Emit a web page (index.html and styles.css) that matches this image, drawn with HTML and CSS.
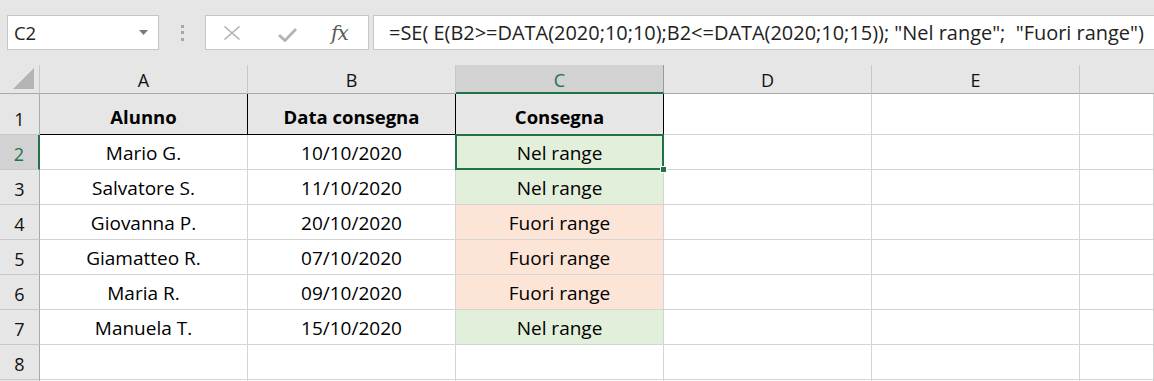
FILE: index.html
```html
<!DOCTYPE html>
<html lang="it">
<head>
<meta charset="utf-8">
<title>Foglio</title>
<link rel="stylesheet" href="styles.css">
</head>
<body>
<div class="app">
  <div class="toolbar">
    <div class="namebox">
      <span class="nb-text">C2</span>
      <svg class="nb-arrow" width="9" height="5" viewBox="0 0 9 5"><path d="M0 0 L9 0 L4.5 5 Z" fill="#7a7a7a"/></svg>
    </div>
    <div class="grip"><i></i><i></i><i></i></div>
    <div class="fxbox">
      <svg class="ic-x" width="18" height="14" viewBox="0 0 18 14"><path d="M1.5 0.5 L16.5 13.5 M16.5 0.5 L1.5 13.5" stroke="#b4b4b4" stroke-width="1.6" fill="none"/></svg>
      <svg class="ic-check" width="19" height="14" viewBox="0 0 19 14"><path d="M1 7 L7 12.5 L18 1" stroke="#b4b4b4" stroke-width="2.8" fill="none"/></svg>
      <span class="ic-fx">fx</span>
    </div>
    <div class="formula">=SE( E(B2&gt;=DATA(2020;10;10);B2&lt;=DATA(2020;10;15)); "Nel range";&nbsp; "Fuori range")</div>
  </div>
  <div class="sheet">
    <div class="colhdr corner"><svg width="22" height="22" viewBox="0 0 22 22"><path d="M21 0 L21 21 L0 21 Z" fill="#b4b4b4"/></svg></div>
    <div class="colhdr">A</div>
    <div class="colhdr">B</div>
    <div class="colhdr sel">C</div>
    <div class="colhdr">D</div>
    <div class="colhdr">E</div>
    <div class="colhdr last"></div>

    <div class="rowhdr">1</div>
    <div class="cell th">Alunno</div>
    <div class="cell th">Data consegna</div>
    <div class="cell th thc">Consegna</div>
    <div class="cell"></div><div class="cell"></div><div class="cell"></div>

    <div class="rowhdr sel">2</div>
    <div class="cell">Mario G.</div>
    <div class="cell">10/10/2020</div>
    <div class="cell in active">Nel range<span class="handle"></span></div>
    <div class="cell"></div><div class="cell"></div><div class="cell"></div>

    <div class="rowhdr">3</div>
    <div class="cell">Salvatore S.</div>
    <div class="cell">11/10/2020</div>
    <div class="cell in">Nel range</div>
    <div class="cell"></div><div class="cell"></div><div class="cell"></div>

    <div class="rowhdr">4</div>
    <div class="cell">Giovanna P.</div>
    <div class="cell">20/10/2020</div>
    <div class="cell out">Fuori range</div>
    <div class="cell"></div><div class="cell"></div><div class="cell"></div>

    <div class="rowhdr">5</div>
    <div class="cell">Giamatteo R.</div>
    <div class="cell">07/10/2020</div>
    <div class="cell out">Fuori range</div>
    <div class="cell"></div><div class="cell"></div><div class="cell"></div>

    <div class="rowhdr">6</div>
    <div class="cell">Maria R.</div>
    <div class="cell">09/10/2020</div>
    <div class="cell out">Fuori range</div>
    <div class="cell"></div><div class="cell"></div><div class="cell"></div>

    <div class="rowhdr">7</div>
    <div class="cell">Manuela T.</div>
    <div class="cell">15/10/2020</div>
    <div class="cell in">Nel range</div>
    <div class="cell"></div><div class="cell"></div><div class="cell"></div>

    <div class="rowhdr">8</div>
    <div class="cell"></div><div class="cell"></div><div class="cell"></div>
    <div class="cell"></div><div class="cell"></div><div class="cell"></div>

    <div class="rowhdr blank"></div>
    <div class="cell"></div><div class="cell"></div><div class="cell"></div>
    <div class="cell"></div><div class="cell"></div><div class="cell"></div>
  </div>
</div>
</body>
</html>
```
FILE: styles.css
```css
* { box-sizing: border-box; }
html, body { margin: 0; padding: 0; }
body {
  width: 1154px;
  height: 381px;
  overflow: hidden;
  background: #e6e6e6;
  font-family: "Open Sans", "Noto Sans", sans-serif;
  color: #000;
}
.app { display: flex; flex-direction: column; height: 381px; overflow: hidden; }

.toolbar {
  height: 65px;
  flex: none;
  display: flex;
  align-items: flex-start;
  padding: 15px 0 0 7px;
}
.namebox {
  width: 152px;
  height: 35px;
  background: #fff;
  border: 1px solid #c6c6c6;
  display: flex;
  align-items: center;
  justify-content: space-between;
  padding: 0 10px 0 6px;
}
.nb-text { font-size: 18.5px; color: #222; letter-spacing: -0.2px; }
.grip {
  width: 46px;
  height: 35px;
  display: flex;
  flex-direction: column;
  align-items: center;
  justify-content: center;
  gap: 3.5px;
}
.grip i { display: block; width: 3px; height: 3px; background: #a8a8a8; }
.fxbox {
  width: 164px;
  height: 35px;
  background: #fff;
  border: 1px solid #c6c6c6;
  display: flex;
  align-items: center;
  padding: 0 0 0 17px;
}
.ic-x { margin-right: 37px; }
.ic-check { margin-right: 34px; margin-top: 4px; }
.ic-fx {
  font-family: "DejaVu Serif", "Liberation Serif", serif;
  font-style: italic;
  font-size: 20px;
  color: #5a5a5a;
  letter-spacing: -1px;
}
.formula {
  flex: 1;
  margin-left: 4px;
  height: 35px;
  background: #fff;
  border: 1px solid #c6c6c6;
  border-right: none;
  font-size: 19.95px;
  color: #222;
  padding: 0 0 0 15px;
  display: flex;
  align-items: center;
  white-space: nowrap;
  overflow: hidden;
}

.sheet {
  display: grid;
  grid-template-columns: 40px 208px 208px 208px 208px 208px 1fr;
  grid-template-rows: 29px 41px repeat(8, 35px);
  background: #fff;
}
.colhdr {
  background: #e6e6e6;
  border-right: 1px solid #c8c8c8;
  border-bottom: 1px solid #a9a9a9;
  display: flex;
  align-items: center;
  justify-content: center;
  font-size: 18px;
  color: #111;
  padding-top: 2px;
}
.colhdr.corner { align-items: flex-end; justify-content: flex-end; padding: 0 4px 3px 0; }
.colhdr.sel {
  background: #d2d2d2;
  color: #217346;
  border-bottom: 2px solid #217346;
  border-right-color: #9a9a9a;
}
.colhdr.last { border-right: none; }

.rowhdr {
  background: #e6e6e6;
  border-right: 1px solid #a9a9a9;
  border-bottom: 1px solid #c8c8c8;
  display: flex;
  align-items: flex-end;
  justify-content: center;
  padding-bottom: 3px;
  font-size: 18px;
  color: #111;
}
.rowhdr.sel {
  background: #d2d2d2;
  color: #217346;
  border-right: 2px solid #217346;
}

.cell {
  position: relative;
  border-right: 1px solid #d4d4d4;
  border-bottom: 1px solid #d4d4d4;
  display: flex;
  align-items: flex-end;
  justify-content: center;
  padding-bottom: 3px;
  font-size: 19px;
  white-space: nowrap;
}
.cell.th {
  background: #e7e6e6;
  font-weight: 700;
  font-size: 18.5px;
  border-right: 1px solid #000;
  border-bottom: 1px solid #000;
  padding-bottom: 5px;
}
.cell.in { background: #e2efda; }
.cell.out { background: #fce4d6; }
.cell.active {
  z-index: 2;
  border: 2px solid #217346;
  margin: -1px 0 0 -1px;
  padding-bottom: 2px;
}
.handle {
  position: absolute;
  right: -5px;
  bottom: -5px;
  width: 7px;
  height: 7px;
  background: #217346;
  border: 1px solid #fff;
}
```
